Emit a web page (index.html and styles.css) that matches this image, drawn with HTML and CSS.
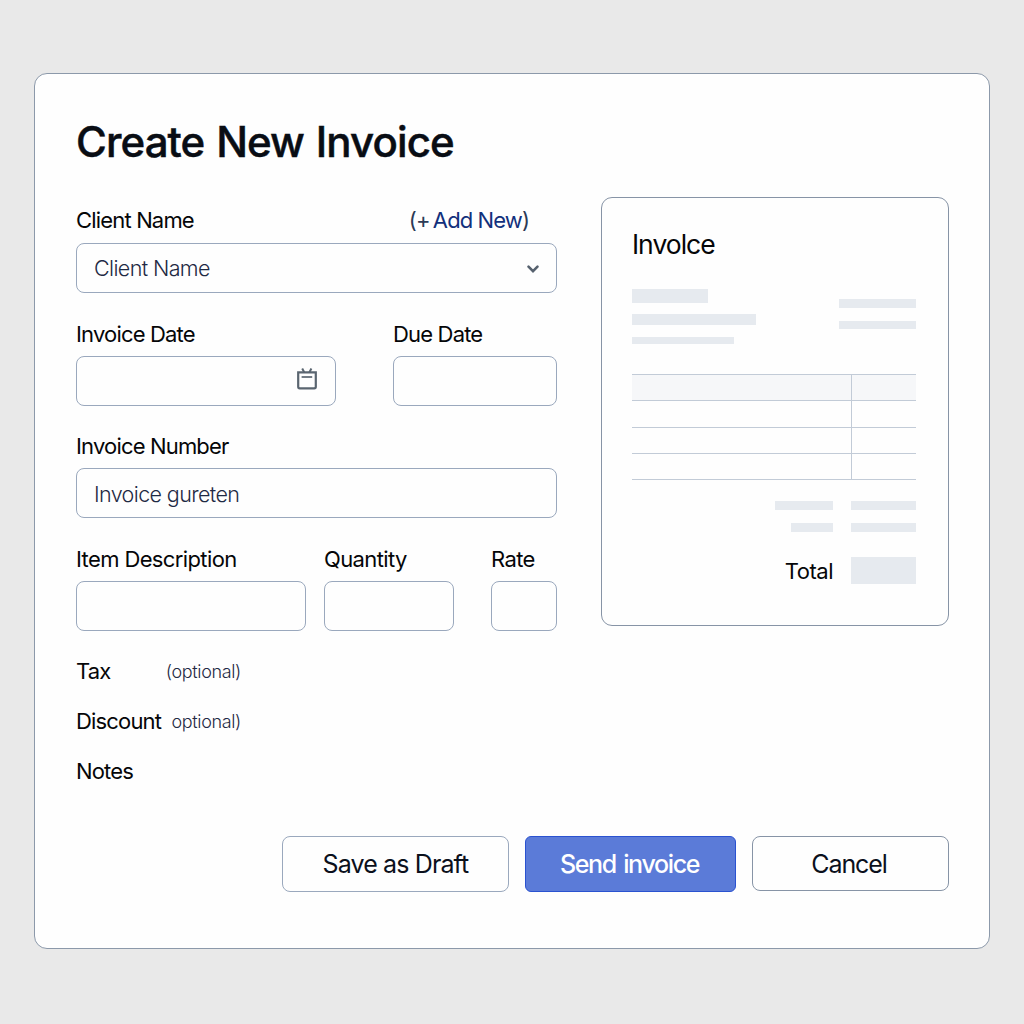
FILE: index.html
```html
<!DOCTYPE html>
<html lang="en">
<head>
<meta charset="utf-8">
<title>Create New Invoice</title>
<link rel="stylesheet" href="styles.css">
</head>
<body>
<main class="card">
  <h1 class="title"><span>Create New Invoice</span></h1>
  <div class="columns">
    <form class="form">
      <div class="field field-client">
        <div class="label-row">
          <label class="label">Client Name</label>
          <span class="add-new"><span class="paren">(+</span> <a>Add New</a><span class="paren">)</span></span>
        </div>
        <div class="input select">
          <span class="value">Client Name</span>
          <svg class="chevron" width="14" height="10" viewBox="0 0 14 10"><path d="M2.500 2.700 7 7.200l4.500-4.500" fill="none" stroke="#56616e" stroke-width="2.600" stroke-linecap="round"/></svg>
        </div>
      </div>
      <div class="row row-dates">
        <div class="field">
          <label class="label">Invoice Date</label>
          <div class="input date">
            <svg class="calendar" width="20" height="22" viewBox="0 0 20 22" fill="none" stroke="#5a6570">
              <path d="M1.200 4.400h17.600v14.400q0 1.500-1.500 1.500H2.700q-1.500 0-1.500-1.500z" stroke-width="2.200"/>
              <path d="M4.600 9h10.600" stroke-width="1.700"/>
              <path d="M5.200 .6l2 3.600M14.400 .6l-2 3.600" stroke-width="2"/>
            </svg>
          </div>
        </div>
        <div class="field">
          <label class="label">Due Date</label>
          <div class="input"></div>
        </div>
      </div>
      <div class="field">
        <label class="label">Invoice Number</label>
        <div class="input"><span class="value number">Invoice gureten</span></div>
      </div>
      <div class="row row-items">
        <div class="field">
          <label class="label">Item Description</label>
          <div class="input"></div>
        </div>
        <div class="field">
          <label class="label">Quantity</label>
          <div class="input"></div>
        </div>
        <div class="field">
          <label class="label">Rate</label>
          <div class="input"></div>
        </div>
      </div>
      <div class="extras">
        <div class="extra"><span class="label">Tax</span><span class="hint">(optional)</span></div>
        <div class="extra"><span class="label">Discount</span><span class="hint">optional)</span></div>
        <div class="extra"><span class="label">Notes</span></div>
      </div>
    </form>
    <aside class="preview">
      <h2 class="preview-title"><span>Involce</span></h2>
      <div class="preview-head">
        <div class="from">
          <div class="bar from-name"></div>
          <div class="bar from-street"></div>
          <div class="bar from-city"></div>
        </div>
        <div class="meta">
          <div class="bar"></div>
          <div class="bar"></div>
        </div>
      </div>
      <div class="table">
        <div class="tr head"><div></div><div></div></div>
        <div class="tr"><div></div><div></div></div>
        <div class="tr"><div></div><div></div></div>
        <div class="tr"><div></div><div></div></div>
      </div>
      <div class="sums">
        <div class="bar sum-label"></div><div class="bar sum-value"></div>
        <div class="bar sum-label short"></div><div class="bar sum-value"></div>
      </div>
      <div class="total"><span class="label">Total</span><div class="bar total-value"></div></div>
    </aside>
  </div>
  <div class="actions">
    <button class="btn draft">Save as Draft</button>
    <button class="btn primary">Send invoice</button>
    <button class="btn cancel">Cancel</button>
  </div>
</main>
</body>
</html>
```
FILE: styles.css
```css
* { box-sizing: border-box; }
body {
  margin: 0;
  height: 1024px;
  padding: 73px 34px 75px;
  background: #e9e9e9;
  font-family: Inter, "Liberation Sans", sans-serif;
  color: #050608;
}
.card {
  height: 876px;
  padding: 43px 40px 0 41px;
  background: #fefefe;
  border: 1px solid #8c99aa;
  border-radius: 13px;
}
.title {
  margin: 0 0 30px;
  font-size: 42px;
  line-height: 50px;
  font-weight: 500;
  letter-spacing: -0.900px;
  word-spacing: 1.500px;
  -webkit-text-stroke: 0.500px #090d14;
  color: #090d14;
}
.columns {
  display: grid;
  grid-template-columns: 481px 348px;
  gap: 44px;
  height: 595px;
}
.form {
  display: flex;
  flex-direction: column;
  gap: 28.600px;
  padding-top: 11px;
}
.field { display: flex; flex-direction: column; gap: 10px; }
.field-client { gap: 11px; }
.label {
  font-size: 22px;
  line-height: 24px;
  letter-spacing: -0.830px;
  white-space: nowrap;
}
.label-row { display: flex; justify-content: space-between; padding-right: 28px; }
.add-new {
  font-size: 22px;
  line-height: 24px;
  letter-spacing: -0.900px;
  word-spacing: -2px;
}
.add-new a { word-spacing: 0; color: #12307c; }
.paren { color: #2c3a55; }
.input {
  height: 50px;
  display: flex;
  align-items: center;
  padding: 0 17px;
  border: 1px solid #9aa8bd;
  border-radius: 8px;
}
.select { padding-right: 16px; justify-content: space-between; }
.chevron { margin-top: 1px; }
.date { justify-content: flex-end; padding-right: 18px; }
.calendar { margin-bottom: 3px; }
.value {
  font-size: 21.500px;
  font-weight: 350;
  letter-spacing: -0.620px;
  color: #1f2a44;
}
.number { padding-top: 2px; }
.row { display: grid; }
.row-dates { grid-template-columns: 260px 164px; justify-content: space-between; }
.row-items { grid-template-columns: 230px 130px 66px; column-gap: 18px; justify-content: start; }
.row-items .label { letter-spacing: -0.620px; }
.row-items .field:last-child { margin-left: 19px; width: 66px; }
.extras { display: flex; flex-direction: column; margin-top: -13px; }
.extra {
  display: flex;
  justify-content: space-between;
  align-items: center;
  width: 165px;
  height: 50px;
}
.hint { font-size: 18px; font-weight: 350; letter-spacing: -0.350px; color: #1f2a44; }
.preview {
  height: 429px;
  padding: 31px 32px 0 30px;
  border: 1px solid #8794a6;
  border-radius: 11px;
}
.preview-title {
  margin: 0;
  font-size: 26.500px;
  line-height: 30px;
  font-weight: 400;
  letter-spacing: -1px;
}
.preview-head { display: flex; justify-content: space-between; height: 86px; padding-top: 30px; }
.bar { background: #e6eaef; }
.from-name { width: 76px; height: 14px; }
.from-street { width: 124px; height: 11px; margin-top: 11px; }
.from-city { width: 102px; height: 7px; margin-top: 12px; }
.meta { display: grid; gap: 13px; align-content: start; padding-top: 10px; }
.meta .bar { width: 77px; height: 8.500px; }
.table { border-top: 1px solid #c2cbd7; margin-top: 29px; }
.tr { display: grid; grid-template-columns: 219px 1fr; height: 26.300px; border-bottom: 1px solid #c2cbd7; }
.tr div + div { border-left: 1px solid #c2cbd7; }
.head { background: #f6f7f9; }
.sums {
  display: grid;
  grid-template-columns: 1fr 65px;
  gap: 13px 18px;
  padding-top: 21px;
}
.sums .bar { height: 9px; }
.sum-label { justify-self: end; width: 58px; }
.sum-label.short { width: 42px; }
.total { display: flex; justify-content: flex-end; align-items: center; gap: 18px; margin-top: 25px; }
.total .label { letter-spacing: -0.500px; }
.total-value { width: 65px; height: 27px; }
.actions { display: flex; justify-content: flex-end; gap: 16px; margin-top: 44px; }
.btn {
  height: 56px;
  padding: 0;
  font: 400 25px/30px Inter, "Liberation Sans", sans-serif;
  letter-spacing: -0.880px;
  color: #0b101c;
  background: #fefefe;
  border: 1px solid #9aa8bd;
  border-radius: 8px;
}
.draft { width: 227px; }
.primary {
  width: 211px;
  padding-right: 2px;
  color: #fff;
  font-weight: 500;
  letter-spacing: -1.350px;
  word-spacing: 2px;
  background: #5b7bd8;
  border-color: #2a52d0;
  border-radius: 6px;
}
.cancel { width: 197px; height: 55px; padding-right: 3px; letter-spacing: -1.100px; border-color: #8794a6; }
```
